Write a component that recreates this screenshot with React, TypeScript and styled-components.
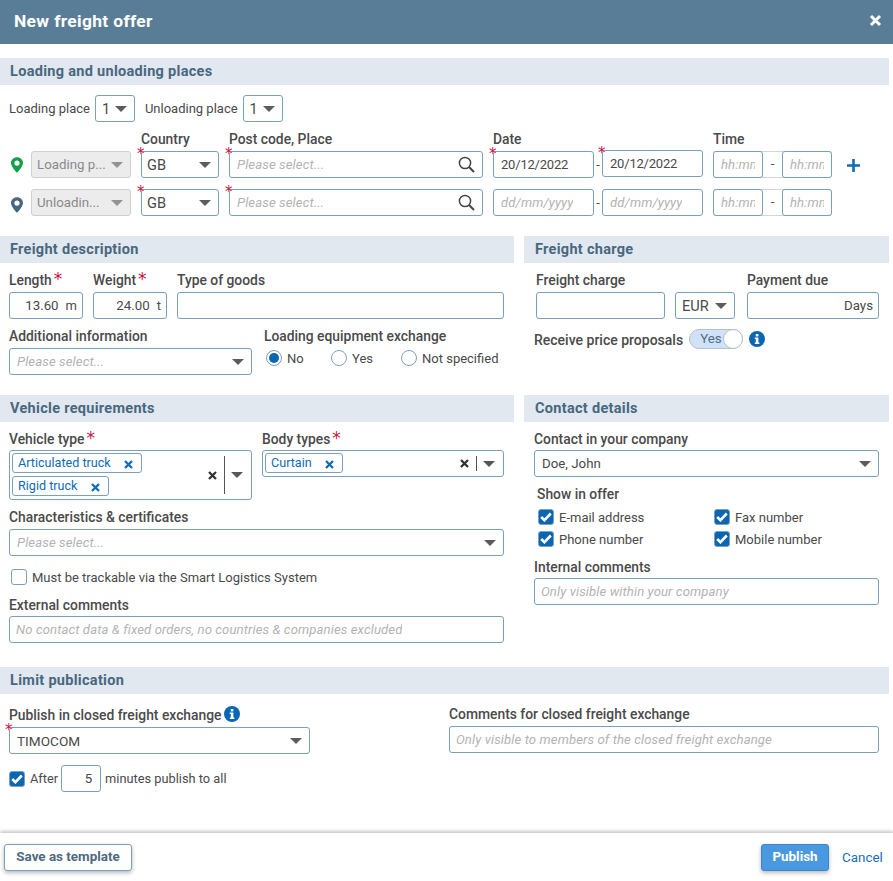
import React from "react";
import styled, { createGlobalStyle } from "styled-components";

const Global = createGlobalStyle`
  html, body { margin: 0; padding: 0; background: #fff; }
  body { font-family: Roboto, "Liberation Sans", sans-serif; font-size: 13px; color: #4a4a4a; }
  * { box-sizing: border-box; }
`;

const Page = styled.div`
  width: 893px; height: 881px; display: flex; flex-direction: column; overflow: hidden; background: #fff;
`;
const Header = styled.header`
  height: 44px; background: #5a7d97; color: #fff; display: flex; align-items: center; justify-content: space-between;
  padding: 0 11px 3px 14px; flex: none;
`;
const Title = styled.h1`
  margin: 0; font-size: 17.4px; font-weight: 700; letter-spacing: 0.35px;
`;
const Content = styled.main`
  flex: 1; padding: 14px 4px 0 0; display: flex; flex-direction: column;
`;
const Band = styled.h2<{ $inset?: number }>`
  margin: 0; height: 27px; background: #e1e8ef; color: #486780; font-size: 14.5px; font-weight: 700; letter-spacing: 0.3px;
  display: flex; align-items: center; padding: 0 0 1px ${(p) => p.$inset ?? 10}px;
`;
const PlacesSection = styled.section`
  height: 178px; flex: none;
`;
const CountRow = styled.div`
  display: flex; align-items: center; height: 27px; margin: 10px 0 0 9px;
`;
const CountLabel = styled.span`
  margin-right: 5px;
`;
const CountSelect = styled.div`
  width: 40px; height: 27px; border: 1px solid #7ba0bb; border-radius: 3px; display: flex; align-items: center;
  justify-content: space-between; padding: 1px 7px 0 6px; margin-right: 10px; font-size: 14.5px;
`;
const PlaceGrid = styled.div`
  display: grid; margin: 9px 0 0 9px; grid-template-columns: 22px 100px 10px 78px 10px 254px 10px 101px 8px 101px 10px 119px 14px 14px;
  grid-template-rows: 15px 27px 27px;
`;
const ColHead = styled.div<{ $col: number }>`
  grid-column: ${(p) => p.$col}; grid-row: 1; font-size: 13.85px; font-weight: 500; line-height: 16px; white-space: nowrap;
`;
const Cell = styled.div<{ $col: number; $row: number }>`
  grid-column: ${(p) => p.$col}; grid-row: ${(p) => p.$row};
  margin-top: ${(p) => (p.$row === 3 ? 16 : 5)}px; position: relative; min-width: 0; height: 27px; display: flex;
`;
const PinCell = styled.div<{ $row: number }>`
  grid-column: 1; grid-row: ${(p) => p.$row}; margin-top: ${(p) => (p.$row === 3 ? 16 : 5)}px; height: 27px; display: flex; align-items: center;
  padding: ${(p) => (p.$row === 3 ? 5 : 1)}px 0 0 2px;
`;
const Star = styled.span<{ $raised?: boolean }>`
  position: absolute; left: -4px; top: ${(p) => (p.$raised ? -5 : -4)}px; color: #c9113f; font-size: 15px; line-height: 15px; font-weight: 500; font-family: "DejaVu Sans", sans-serif; z-index: 1;
`;
const Field = styled.div<{ $align?: string; $disabled?: boolean; $raised?: boolean; $pl?: number; $pr?: number; $size?: number }>`
  width: 100%; height: 27px; border: 1px solid ${(p) => (p.$disabled ? "#cfcfcf" : "#7ba0bb")}; border-radius: 3px;
  background: ${(p) => (p.$disabled ? "#ececec" : "#fff")}; color: ${(p) => (p.$disabled ? "#8a8a8a" : "#4a4a4a")};
  display: flex; align-items: center; justify-content: ${(p) => p.$align ?? "space-between"}; padding: 0 ${(p) => p.$pr ?? 7}px 0 ${(p) => p.$pl ?? 7}px;
  font-size: ${(p) => p.$size ?? 13.3}px; white-space: nowrap; overflow: hidden; min-width: 0;
  ${(p) => (p.$raised ? "margin-top: -1px;" : "")}
`;
const DateValue = styled.span`
  font-size: 13px; letter-spacing: -0.2px;
`;
const Ellipsis = styled.span`
  overflow: hidden; text-overflow: ellipsis; min-width: 0; flex: 1;
`;
const Placeholder = styled.span`
  font-style: italic; color: #b3b3b3; font-size: 13.15px; white-space: nowrap; overflow: hidden; letter-spacing: 0.1px;
`;
const Dash = styled.div`
  flex: none; width: 8px; text-align: center; line-height: 27px; font-size: 13px;
`;
const TimeGroup = styled.div`
  width: 119px; height: 27px; display: flex; border-top: 1px solid #d4d4d4; border-bottom: 1px solid #d4d4d4; border-radius: 3px;
`;
const TimeBox = styled.div`
  width: 50px; height: 27px; margin-top: -1px; border: 1px solid #7ba0bb; border-radius: 3px; display: flex; align-items: center; padding: 0 7px; overflow: hidden; flex: none;
`;
const TimeDash = styled.div`
  flex: 1; text-align: center; line-height: 23px; font-size: 13px;
`;
const PlusCell = styled.div`
  grid-column: 13 / span 2; grid-row: 2; margin-top: 5px; height: 27px; display: flex; align-items: center; justify-content: flex-end; padding-top: 2px;
`;

const Columns = styled.div`
  display: grid; grid-template-columns: 514px 365px; column-gap: 10px; flex: none;
`;
const Block = styled.section<{ $h: number }>`
  height: ${(p) => p.$h}px; min-width: 0;
`;
const Label = styled.label`
  display: block; height: 16px; font-size: 13.85px; font-weight: 500; line-height: 16px; white-space: nowrap; color: #4a4a4a;
`;
const StarInline = styled.span`
  color: #c9113f; font-size: 17px; line-height: 0; margin-left: 2px; vertical-align: 0; font-family: "DejaVu Sans", sans-serif;
`;
const Row = styled.div<{ $top: number; $left: number; $right?: number; $gap?: number }>`
  display: flex; gap: ${(p) => p.$gap ?? 10}px; margin: ${(p) => p.$top}px ${(p) => p.$right ?? 0}px 0 ${(p) => p.$left}px; align-items: flex-start;
`;
const Stack = styled.div<{ $w?: number; $grow?: boolean; $ml?: number; $mt?: number; $gap?: number }>`
  display: flex; flex-direction: column; gap: ${(p) => p.$gap ?? 4}px; ${(p) => (p.$w ? `width:${p.$w}px;flex:none;` : "")} ${(p) => (p.$grow ? "flex:1;min-width:0;" : "")}
  margin-left: ${(p) => p.$ml ?? 0}px; margin-top: ${(p) => p.$mt ?? 0}px;
`;
const Unit = styled.span`
  margin-left: 7px; font-size: 13px;
`;
const RadioRow = styled.div`
  display: flex; align-items: center; height: 20px;
`;
const RadioCircle = styled.span<{ $on?: boolean }>`
  width: 16px; height: 16px; border-radius: 50%; border: 1px solid #7ba0bb; background: #fff; flex: none; display: flex; align-items: center; justify-content: center;
  margin: 0 5px 0 2px;
  &::after { content: ""; width: 10px; height: 10px; border-radius: 50%; background: ${(p) => (p.$on ? "#0a66b2" : "transparent")}; }
`;
const RadioText = styled.span<{ $w: number }>`
  width: ${(p) => p.$w}px; white-space: nowrap;
`;
const ToggleRow = styled.div`
  display: flex; align-items: center; margin: 10px 0 0 10px; height: 20px;
`;
const ToggleLabel = styled.span`
  font-size: 14px; font-weight: 500; margin-right: 6px; white-space: nowrap; padding-top: 2px;
`;
const Toggle = styled.div`
  width: 54px; height: 20px; border-radius: 10px; background: #cfe2f8; border: 1px solid #b9bfc5; position: relative; font-size: 13.3px; color: #4f6d84;
  padding-left: 10px; line-height: 17px; margin-right: 6px; flex: none;
`;
const Knob = styled.span`
  position: absolute; right: -1px; top: -1px; width: 20px; height: 20px; border-radius: 50%; background: #fff; border: 1px solid #b9bfc5;
`;
const MultiBox = styled.div<{ $h: number }>`
  height: ${(p) => p.$h}px; border: 1px solid #7ba0bb; border-radius: 3px; display: flex; align-items: flex-start; padding: 2px 0 0 2px; width: 100%;
`;
const Chips = styled.div`
  flex: 1; display: flex; flex-direction: column; align-items: flex-start; gap: 3px; min-width: 0;
`;
const Chip = styled.div`
  height: 20px; border: 1px solid #7ba0bb; border-radius: 3px; color: #0f6cb5; font-size: 12.6px; display: flex; align-items: center; padding: 0 8px 2px 5px; white-space: nowrap;
`;
const ChipX = styled.span`
  margin-left: 13px; display: flex; padding-top: 5px;
`;
const MultiActions = styled.div`
  align-self: center; display: flex; align-items: center; height: 100%; margin-top: -2px; flex: none; padding-right: 8px; color: #444;
`;
const VSep = styled.span<{ $h: number }>`
  width: 1px; height: ${(p) => p.$h}px; background: #555; margin: 0 6px 0 7px;
`;
const CheckRow = styled.div<{ $top?: number; $left?: number }>`
  display: flex; align-items: center; gap: 5px; height: 16px; margin: ${(p) => p.$top ?? 0}px 0 0 ${(p) => p.$left ?? 0}px; white-space: nowrap;
`;
const Box = styled.span<{ $on?: boolean }>`
  width: 16px; height: 16px; border-radius: 3px; border: 1px solid #7ba0bb; background: ${(p) => (p.$on ? "#0a66b2" : "#fff")}; flex: none; display: flex; align-items: center; justify-content: center; color: #fff;
`;
const CheckGrid = styled.div`
  display: grid; grid-template-columns: 176px 150px; row-gap: 6px; margin: 7px 0 0 14px;
`;
const PublishRow = styled.div`
  display: flex; align-items: center; margin: 11px 0 0 9px; height: 27px; gap: 5px; font-size: 12.8px;
`;
const SmallInput = styled.div`
  width: 40px; height: 27px; border: 1px solid #7ba0bb; border-radius: 3px; display: flex; align-items: center; justify-content: flex-end; padding-right: 8px; font-size: 13.3px;
  margin: 0 -1px 0 -2px;
`;
const LimitGrid = styled.div`
  display: grid; grid-template-columns: 440px 430px; margin-left: 9px; padding-top: 13px; height: 60px;
`;
const LabelIcon = styled.span`
  display: inline-flex; vertical-align: -2px; margin-left: 3px; line-height: 0; height: 10px; align-items: flex-end;
`;
const LimitSelect = styled.div`
  width: 301px; position: relative; margin-top: 4px;
`;
const Footer = styled.footer`
  height: 48px; flex: none; margin-top: auto; display: flex; align-items: center; padding: 1px 11px 0 4px; gap: 13px; background: #fff;
  box-shadow: 0 -2px 3px rgba(0, 0, 0, 0.22);
`;
const TemplateButton = styled.button`
  height: 27px; width: 128px; background: #fff; border: 1px solid #7ba0bb; border-radius: 3px; color: #4d6a80; font: 700 13.4px Roboto, sans-serif;
  box-shadow: 0 2px 4px rgba(0, 0, 0, 0.28); padding: 0 0 2px; margin-right: auto;
`;
const PublishButton = styled.button`
  height: 27px; width: 68px; background: #4a98e0; border: 1px solid #3c87cc; border-radius: 3px; color: #fff; font: 700 13.4px Roboto, sans-serif;
  box-shadow: 0 2px 4px rgba(0, 0, 0, 0.28); padding: 0 0 2px;
`;
const CancelLink = styled.a`
  color: #1a6fb5; font-size: 13.4px; width: 40px;
`;
const FixedSvg = styled.svg`
  flex: none;
`;

const Caret = () => (
  <FixedSvg width="12" height="6" viewBox="0 0 12 6"><path d="M0 0h12L6 6z" fill="currentColor" opacity="0.9" /></FixedSvg>
);
const SmallX = ({ color = "#333" }: { color?: string }) => (
  <svg width="9" height="9" viewBox="0 0 9 9"><path d="M1 1l7 7M8 1L1 8" stroke={color} strokeWidth="2.3" /></svg>
);
const Pin = ({ color }: { color: string }) => (
  <svg width="12" height="16" viewBox="0 0 13 17">
    <path fillRule="evenodd" fill={color} d="M6.5 0C2.9 0 0 2.8 0 6.3 0 10.5 6.5 17 6.5 17S13 10.5 13 6.300C13 2.800 10.100 0 6.500 0zm0 3.600a2.800 2.800 0 1 1 0 5.600 2.800 2.800 0 0 1 0-5.600z" />
  </svg>
);
const Search = () => (
  <FixedSvg width="17" height="17" viewBox="0 0 17 17" fill="none" stroke="#444">
    <circle cx="7" cy="7" r="5.600" strokeWidth="1.500" /><path d="M11 11l5 5" strokeWidth="2" />
  </FixedSvg>
);
const Info = () => (
  <svg width="16" height="16" viewBox="0 0 16 16"><circle cx="8" cy="8" r="8" fill="#0a66b2" />
    <rect x="6.800" y="3" width="2.600" height="2.400" fill="#fff" /><path d="M5.800 6.600h3.600v4.800h1v1.500H5.800v-1.500h1V8.100h-1z" fill="#fff" /></svg>
);
const Check = () => (
  <svg width="12" height="10" viewBox="0 0 12 10" fill="none"><path d="M1.200 5l3.200 3.200L10.800 1.500" stroke="#fff" strokeWidth="2.600" /></svg>
);

const Req = () => <Star>*</Star>;

const TimeRange = () => (
  <TimeGroup>
    <TimeBox><Placeholder>hh:mm</Placeholder></TimeBox>
    <TimeDash>-</TimeDash>
    <TimeBox><Placeholder>hh:mm</Placeholder></TimeBox>
  </TimeGroup>
);

export default function App() {
  return (
    <Page>
      <Global />
      <Header>
        <Title>New freight offer</Title>
        <svg width="13" height="13" viewBox="0 0 13 13"><path d="M2 2l9 9M11 2l-9 9" stroke="#fff" strokeWidth="3" /></svg>
      </Header>
      <Content>
        <PlacesSection>
          <Band>Loading and unloading places</Band>
          <CountRow>
            <CountLabel>Loading place</CountLabel>
            <CountSelect>1 <Caret /></CountSelect>
            <CountLabel>Unloading place</CountLabel>
            <CountSelect>1 <Caret /></CountSelect>
          </CountRow>
          <PlaceGrid>
            <ColHead $col={4}>Country</ColHead>
            <ColHead $col={6}>Post code, Place</ColHead>
            <ColHead $col={8}>Date</ColHead>
            <ColHead $col={12}>Time</ColHead>

            <PinCell $row={2}><Pin color="#12a14a" /></PinCell>
            <Cell $col={2} $row={2}><Field $disabled $pl={5}><Ellipsis>Loading p...</Ellipsis><Caret /></Field></Cell>
            <Cell $col={4} $row={2}><Req /><Field $pl={5} $size={14.6}>GB <Caret /></Field></Cell>
            <Cell $col={6} $row={2}><Req /><Field><Placeholder>Please select...</Placeholder><Search /></Field></Cell>
            <Cell $col={8} $row={2}><Req /><Field><DateValue>20/12/2022</DateValue></Field></Cell>
            <Cell $col={9} $row={2}><Dash>-</Dash></Cell>
            <Cell $col={10} $row={2}><Star $raised>*</Star><Field $raised><DateValue>20/12/2022</DateValue></Field></Cell>
            <Cell $col={12} $row={2}><TimeRange /></Cell>
            <PlusCell>
              <svg width="13" height="13" viewBox="0 0 13 13"><path d="M6.500 0v13M0 6.500h13" stroke="#0f6cb5" strokeWidth="2.600" /></svg>
            </PlusCell>

            <PinCell $row={3}><Pin color="#486780" /></PinCell>
            <Cell $col={2} $row={3}><Field $disabled $pl={5}><Ellipsis>Unloadin...</Ellipsis><Caret /></Field></Cell>
            <Cell $col={4} $row={3}><Req /><Field $pl={5} $size={14.6}>GB <Caret /></Field></Cell>
            <Cell $col={6} $row={3}><Req /><Field><Placeholder>Please select...</Placeholder><Search /></Field></Cell>
            <Cell $col={8} $row={3}><Field><Placeholder>dd/mm/yyyy</Placeholder></Field></Cell>
            <Cell $col={9} $row={3}><Dash>-</Dash></Cell>
            <Cell $col={10} $row={3}><Field><Placeholder>dd/mm/yyyy</Placeholder></Field></Cell>
            <Cell $col={12} $row={3}><TimeRange /></Cell>
          </PlaceGrid>
        </PlacesSection>

        <Columns>
          <Block $h={159}>
            <Band>Freight description</Band>
            <Row $top={9} $left={9} $right={10}>
              <Stack $w={74}><Label>Length<StarInline>*</StarInline></Label>
                <Field $align="flex-end" $pr={5}>13.60<Unit>m</Unit></Field></Stack>
              <Stack $w={74}><Label>Weight<StarInline>*</StarInline></Label>
                <Field $align="flex-end" $pr={5}>24.00<Unit>t</Unit></Field></Stack>
              <Stack $grow><Label>Type of goods</Label><Field /></Stack>
            </Row>
            <Row $top={9} $left={9} $right={10} $gap={12}>
              <Stack $w={243}><Label>Additional information</Label>
                <Field><Placeholder>Please select...</Placeholder><Caret /></Field></Stack>
              <Stack $grow><Label>Loading equipment exchange</Label>
                <RadioRow>
                  <RadioCircle $on /><RadioText $w={42}>No</RadioText>
                  <RadioCircle /><RadioText $w={47}>Yes</RadioText>
                  <RadioCircle /><RadioText $w={80}>Not specified</RadioText>
                </RadioRow>
              </Stack>
            </Row>
          </Block>
          <Block $h={159}>
            <Band $inset={11}>Freight charge</Band>
            <Row $top={9} $left={12} $right={10}>
              <Stack $w={129}><Label>Freight charge</Label><Field /></Stack>
              <Stack $w={60}><Label>&nbsp;</Label><Field $size={14.6} $pl={6}>EUR <Caret /></Field></Stack>
              <Stack $w={132} $ml={2}><Label>Payment due</Label><Field $align="flex-end" $pr={5}>Days</Field></Stack>
            </Row>
            <ToggleRow>
              <ToggleLabel>Receive price proposals</ToggleLabel>
              <Toggle>Yes<Knob /></Toggle>
              <Info />
            </ToggleRow>
          </Block>
        </Columns>

        <Columns>
          <Block $h={272}>
            <Band>Vehicle requirements</Band>
            <Row $top={9} $left={9} $right={10}>
              <Stack $w={243} $gap={3}>
                <Label>Vehicle type<StarInline>*</StarInline></Label>
                <MultiBox $h={50}>
                  <Chips>
                    <Chip>Articulated truck<ChipX><SmallX color="#0f6cb5" /></ChipX></Chip>
                    <Chip>Rigid truck<ChipX><SmallX color="#0f6cb5" /></ChipX></Chip>
                  </Chips>
                  <MultiActions><SmallX /><VSep $h={38} /><Caret /></MultiActions>
                </MultiBox>
              </Stack>
              <Stack $grow $gap={3}>
                <Label>Body types<StarInline>*</StarInline></Label>
                <MultiBox $h={27}>
                  <Chips><Chip>Curtain<ChipX><SmallX color="#0f6cb5" /></ChipX></Chip></Chips>
                  <MultiActions><SmallX /><VSep $h={15} /><Caret /></MultiActions>
                </MultiBox>
              </Stack>
            </Row>
            <Row $top={9} $left={9} $right={10}>
              <Stack $grow><Label>Characteristics &amp; certificates</Label>
                <Field><Placeholder>Please select...</Placeholder><Caret /></Field></Stack>
            </Row>
            <CheckRow $top={13} $left={11}><Box />Must be trackable via the Smart Logistics System</CheckRow>
            <Row $top={12} $left={9} $right={10}>
              <Stack $grow $gap={3}><Label>External comments</Label>
                <Field $pl={6}><Placeholder>No contact data &amp; fixed orders, no countries &amp; companies excluded</Placeholder></Field></Stack>
            </Row>
          </Block>
          <Block $h={272}>
            <Band $inset={11}>Contact details</Band>
            <Row $top={9} $left={10} $right={10}>
              <Stack $grow $gap={3}><Label>Contact in your company</Label><Field>Doe, John <Caret /></Field></Stack>
            </Row>
            <Row $top={9} $left={13}><Label>Show in offer</Label></Row>
            <CheckGrid>
              <CheckRow><Box $on><Check /></Box>E-mail address</CheckRow>
              <CheckRow><Box $on><Check /></Box>Fax number</CheckRow>
              <CheckRow><Box $on><Check /></Box>Phone number</CheckRow>
              <CheckRow><Box $on><Check /></Box>Mobile number</CheckRow>
            </CheckGrid>
            <Row $top={12} $left={10} $right={10}>
              <Stack $grow $gap={3}><Label>Internal comments</Label>
                <Field $pl={6}><Placeholder>Only visible within your company</Placeholder></Field></Stack>
            </Row>
          </Block>
        </Columns>

        <section>
          <Band>Limit publication</Band>
          <LimitGrid>
            <div>
              <Label>Publish in closed freight exchange<LabelIcon><Info /></LabelIcon></Label>
              <LimitSelect><Req /><Field $size={13.6}>TIMOCOM <Caret /></Field></LimitSelect>
            </div>
            <Stack $mt={-1}>
              <Label>Comments for closed freight exchange</Label>
              <Field $pl={6}><Placeholder>Only visible to members of the closed freight exchange</Placeholder></Field>
            </Stack>
          </LimitGrid>
          <PublishRow>
            <Box $on><Check /></Box>After<SmallInput>5</SmallInput>minutes publish to all
          </PublishRow>
        </section>
      </Content>
      <Footer>
        <TemplateButton>Save as template</TemplateButton>
        <PublishButton>Publish</PublishButton>
        <CancelLink>Cancel</CancelLink>
      </Footer>
    </Page>
  );
}
